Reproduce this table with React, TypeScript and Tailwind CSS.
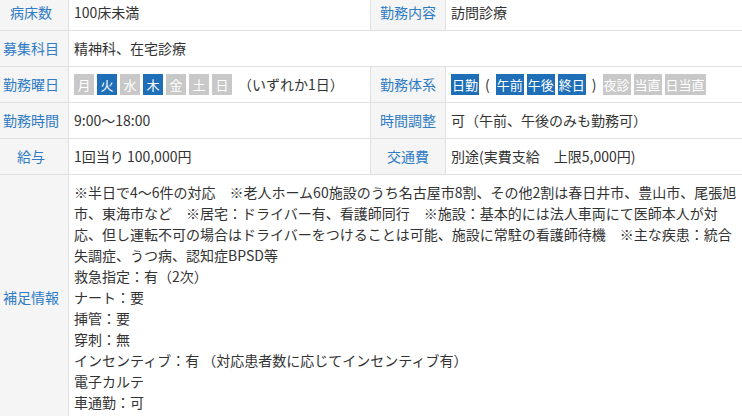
import React from "react";

type Badge = { label: string; on: boolean };

const days: Badge[] = [
  { label: "月", on: false },
  { label: "火", on: true },
  { label: "水", on: false },
  { label: "木", on: true },
  { label: "金", on: false },
  { label: "土", on: false },
  { label: "日", on: false },
];

const notes = [
  "※半日で4〜6件の対応　※老人ホーム60施設のうち名古屋市8割、その他2割は春日井市、豊山市、尾張旭",
  "市、東海市など　※居宅：ドライバー有、看護師同行　※施設：基本的には法人車両にて医師本人が対",
  "応、但し運転不可の場合はドライバーをつけることは可能、施設に常駐の看護師待機　※主な疾患：統合",
  "失調症、うつ病、認知症BPSD等",
  "救急指定：有（2次）",
  "ナート：要",
  "挿管：要",
  "穿刺：無",
  "インセンティブ：有 （対応患者数に応じてインセンティブ有）",
  "電子カルテ",
  "車通勤：可",
];

const Tag: React.FC<Badge & { wide?: boolean }> = ({ label, on, wide }) => (
  <span
    className={`inline-block h-[21px] leading-[21px] text-[13px] text-white text-center ${
      wide ? "px-[1px]" : "w-[20px]"
    } ${on ? "bg-[#1f6fb8]" : "bg-[#c8c8c8]"}`}
  >
    {label}
  </span>
);

const Th: React.FC<{ children: React.ReactNode; className?: string }> = ({
  children,
  className = "",
}) => (
  <th
    className={`border border-[#e0e0e0] bg-[#f5f5f5] text-[#2f7bc4] font-normal text-center align-middle py-[7px] px-0 ${className}`}
  >
    {children}
  </th>
);

const Td: React.FC<{
  children: React.ReactNode;
  colSpan?: number;
  className?: string;
}> = ({ children, colSpan, className = "" }) => (
  <td
    colSpan={colSpan}
    className={`border border-[#e0e0e0] bg-white text-[#333] py-[7px] pl-[5px] pr-[6px] whitespace-nowrap ${className}`}
  >
    {children}
  </td>
);

export default function App() {
  return (
    <div
      className="w-[742px] h-[416px] overflow-hidden bg-white"
      style={{ fontFamily: '"Noto Sans CJK JP", "Noto Sans", sans-serif' }}
    >
      <table className="table-fixed border-collapse w-[754px] -ml-[7px] -mt-[6px] text-[14px] leading-[21px]">
        <colgroup>
          <col className="w-[75px]" />
          <col className="w-[302px]" />
          <col className="w-[75px]" />
          <col className="w-[302px]" />
        </colgroup>
        <tbody>
          <tr>
            <Th>病床数</Th>
            <Td>100床未満</Td>
            <Th>勤務内容</Th>
            <Td>訪問診療</Td>
          </tr>
          <tr>
            <Th>募集科目</Th>
            <Td colSpan={3}>精神科、在宅診療</Td>
          </tr>
          <tr>
            <Th>勤務曜日</Th>
            <Td>
              <div className="flex items-center gap-[3px]">
                {days.map((d) => (
                  <Tag key={d.label} {...d} />
                ))}
                <span className="ml-[3px]">（いずれか1日）</span>
              </div>
            </Td>
            <Th>勤務体系</Th>
            <Td>
              <div className="flex items-center gap-[3px]">
                <Tag label="日勤" on wide />
                <span className="px-[3px]">(</span>
                <Tag label="午前" on wide />
                <Tag label="午後" on wide />
                <Tag label="終日" on wide />
                <span className="px-[3px]">)</span>
                <Tag label="夜診" on={false} wide />
                <Tag label="当直" on={false} wide />
                <Tag label="日当直" on={false} wide />
              </div>
            </Td>
          </tr>
          <tr>
            <Th>勤務時間</Th>
            <Td>9:00〜18:00</Td>
            <Th>時間調整</Th>
            <Td>可（午前、午後のみも勤務可）</Td>
          </tr>
          <tr>
            <Th>給与</Th>
            <Td>1回当り 100,000円</Td>
            <Th>交通費</Th>
            <Td>別途(実費支給　上限5,000円)</Td>
          </tr>
          <tr>
            <Th>補足情報</Th>
            <Td colSpan={3} className="align-top">
              {notes.map((line) => (
                <div key={line}>{line}</div>
              ))}
            </Td>
          </tr>
        </tbody>
      </table>
    </div>
  );
}
